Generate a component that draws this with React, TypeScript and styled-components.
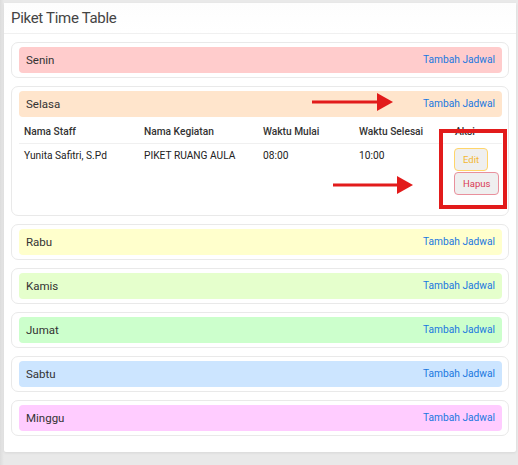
import React from 'react';
import styled, { createGlobalStyle } from 'styled-components';

const GlobalStyle = createGlobalStyle`
  html, body {
    margin: 0;
    padding: 0;
    background: #e8e8e8;
    font-family: Roboto, "Liberation Sans", Arial, sans-serif;
    color: #333;
  }
`;

const Page = styled.div`
  padding: 3px 2px 14px 4px;
  background: linear-gradient(90deg, #dcdcdc 0, #e9e9e9 4px);
`;

const Panel = styled.div`
  position: relative;
  background: #fff;
  border-radius: 2px;
  box-shadow: 0 1px 3px rgba(0, 0, 0, 0.08);
`;

const PanelHeader = styled.div`
  height: 30px;
  padding: 0 7px;
  display: flex;
  align-items: center;
  border-bottom: 1px solid #f0f0f0;
  background: linear-gradient(180deg, #fdfdfd, #fff);
`;

const Title = styled.h3`
  margin: 0;
  font-size: 15px;
  letter-spacing: -0.3px;
  font-weight: 400;
  color: #444;
`;

const PanelBody = styled.div`
  padding: 8px 7px 16px;
  display: flex;
  flex-direction: column;
  gap: 8px;
`;

const DayCard = styled.div`
  border: 1px solid #e9e9e9;
  border-radius: 7px;
  padding: 4px 6px 4px 7px;
  background: #fff;
`;

const DayBar = styled.div<{ $bg: string }>`
  height: 26px;
  border-radius: 4px;
  background: ${p => p.$bg};
  display: flex;
  align-items: center;
  justify-content: space-between;
  padding: 0 7px;
  font-size: 11.5px;
  line-height: 14px;
  color: #333;
`;

const AddLink = styled.a`
  font-size: 10.2px;
  color: #1a78e0;
  text-decoration: none;
  cursor: pointer;
`;

const Table = styled.table`
  width: 100%;
  table-layout: fixed;
  border-collapse: collapse;
  margin: 0 0 13px;
  font-size: 10.2px;
  line-height: 13px;
`;

const Col = styled.col<{ $w?: number }>`
  width: ${p => (p.$w ? `${p.$w}px` : 'auto')};
`;

const Th = styled.th`
  text-align: left;
  font-weight: 500;
  color: #333;
  padding: 8px 5px 5px;
  border-bottom: 1px solid #f0f0f0;
  white-space: nowrap;
`;

const Td = styled.td`
  vertical-align: top;
  padding: 5px 5px;
  color: #222;
  white-space: nowrap;
`;

const ActionCell = styled.td`
  vertical-align: top;
  padding: 4px 4px 3px;
`;

const Actions = styled.div`
  display: flex;
  flex-direction: column;
  align-items: flex-start;
  gap: 1px;
`;

const SmallButton = styled.button<{ $fg: string; $border: string }>`
  font-family: Roboto, "Liberation Sans", Arial, sans-serif;
  font-size: 9.5px;
  color: ${p => p.$fg};
  background: #efefef;
  border: 1px solid ${p => p.$border};
  border-radius: 4px;
  height: 23px;
  padding: 0 8px;
  cursor: pointer;
`;

const Arrow = styled.svg`
  position: absolute;
  overflow: visible;
`;

const Highlight = styled.div`
  position: absolute;
  left: 435px;
  top: 126px;
  width: 60px;
  height: 72px;
  border: 4px solid #e21b1b;
`;

type Day = { name: string; bg: string };

const days: Day[] = [
  { name: 'Senin', bg: '#ffcccc' },
  { name: 'Selasa', bg: '#ffe5cc' },
  { name: 'Rabu', bg: '#ffffcc' },
  { name: 'Kamis', bg: '#e5ffcc' },
  { name: 'Jumat', bg: '#ccffcc' },
  { name: 'Sabtu', bg: '#cce5ff' },
  { name: 'Minggu', bg: '#ffccff' },
];

const schedule: Record<string, { staff: string; kegiatan: string; mulai: string; selesai: string }[]> = {
  Selasa: [
    { staff: 'Yunita Safitri, S.Pd', kegiatan: 'PIKET RUANG AULA', mulai: '08:00', selesai: '10:00' },
  ],
};

const RedArrow: React.FC<{ x: number; y: number; len: number }> = ({ x, y, len }) => (
  <Arrow style={{ left: x, top: y - 10 }} width={len} height={20} viewBox={`0 0 ${len} 20`}>
    <rect x={0} y={8.5} width={len - 14} height={3} fill="#e21b1b" />
    <polygon points={`${len - 16},1 ${len},10 ${len - 16},19`} fill="#e21b1b" />
  </Arrow>
);

const App: React.FC = () => {
  return (
    <Page>
      <GlobalStyle />
      <Panel>
        <PanelHeader>
          <Title>Piket Time Table</Title>
        </PanelHeader>
        <PanelBody>
          {days.map(day => {
            const rows = schedule[day.name];
            return (
              <DayCard key={day.name}>
                <DayBar $bg={day.bg}>
                  <span>{day.name}</span>
                  <AddLink>Tambah Jadwal</AddLink>
                </DayBar>
                {rows && (
                  <Table>
                    <colgroup>
                      <Col $w={120} />
                      <Col $w={119} />
                      <Col $w={96} />
                      <Col $w={96} />
                      <Col />
                    </colgroup>
                    <thead>
                      <tr>
                        <Th>Nama Staff</Th>
                        <Th>Nama Kegiatan</Th>
                        <Th>Waktu Mulai</Th>
                        <Th>Waktu Selesai</Th>
                        <Th>Aksi</Th>
                      </tr>
                    </thead>
                    <tbody>
                      {rows.map(r => (
                        <tr key={r.staff}>
                          <Td>{r.staff}</Td>
                          <Td>{r.kegiatan}</Td>
                          <Td>{r.mulai}</Td>
                          <Td>{r.selesai}</Td>
                          <ActionCell>
                            <Actions>
                              <SmallButton $fg="#f3b731" $border="#ffd56a">Edit</SmallButton>
                              <SmallButton $fg="#d93a55" $border="#e9909c">Hapus</SmallButton>
                            </Actions>
                          </ActionCell>
                        </tr>
                      ))}
                    </tbody>
                  </Table>
                )}
              </DayCard>
            );
          })}
        </PanelBody>
        <RedArrow x={308} y={99} len={81} />
        <RedArrow x={329} y={182} len={80} />
        <Highlight />
      </Panel>
    </Page>
  );
};

export default App;
